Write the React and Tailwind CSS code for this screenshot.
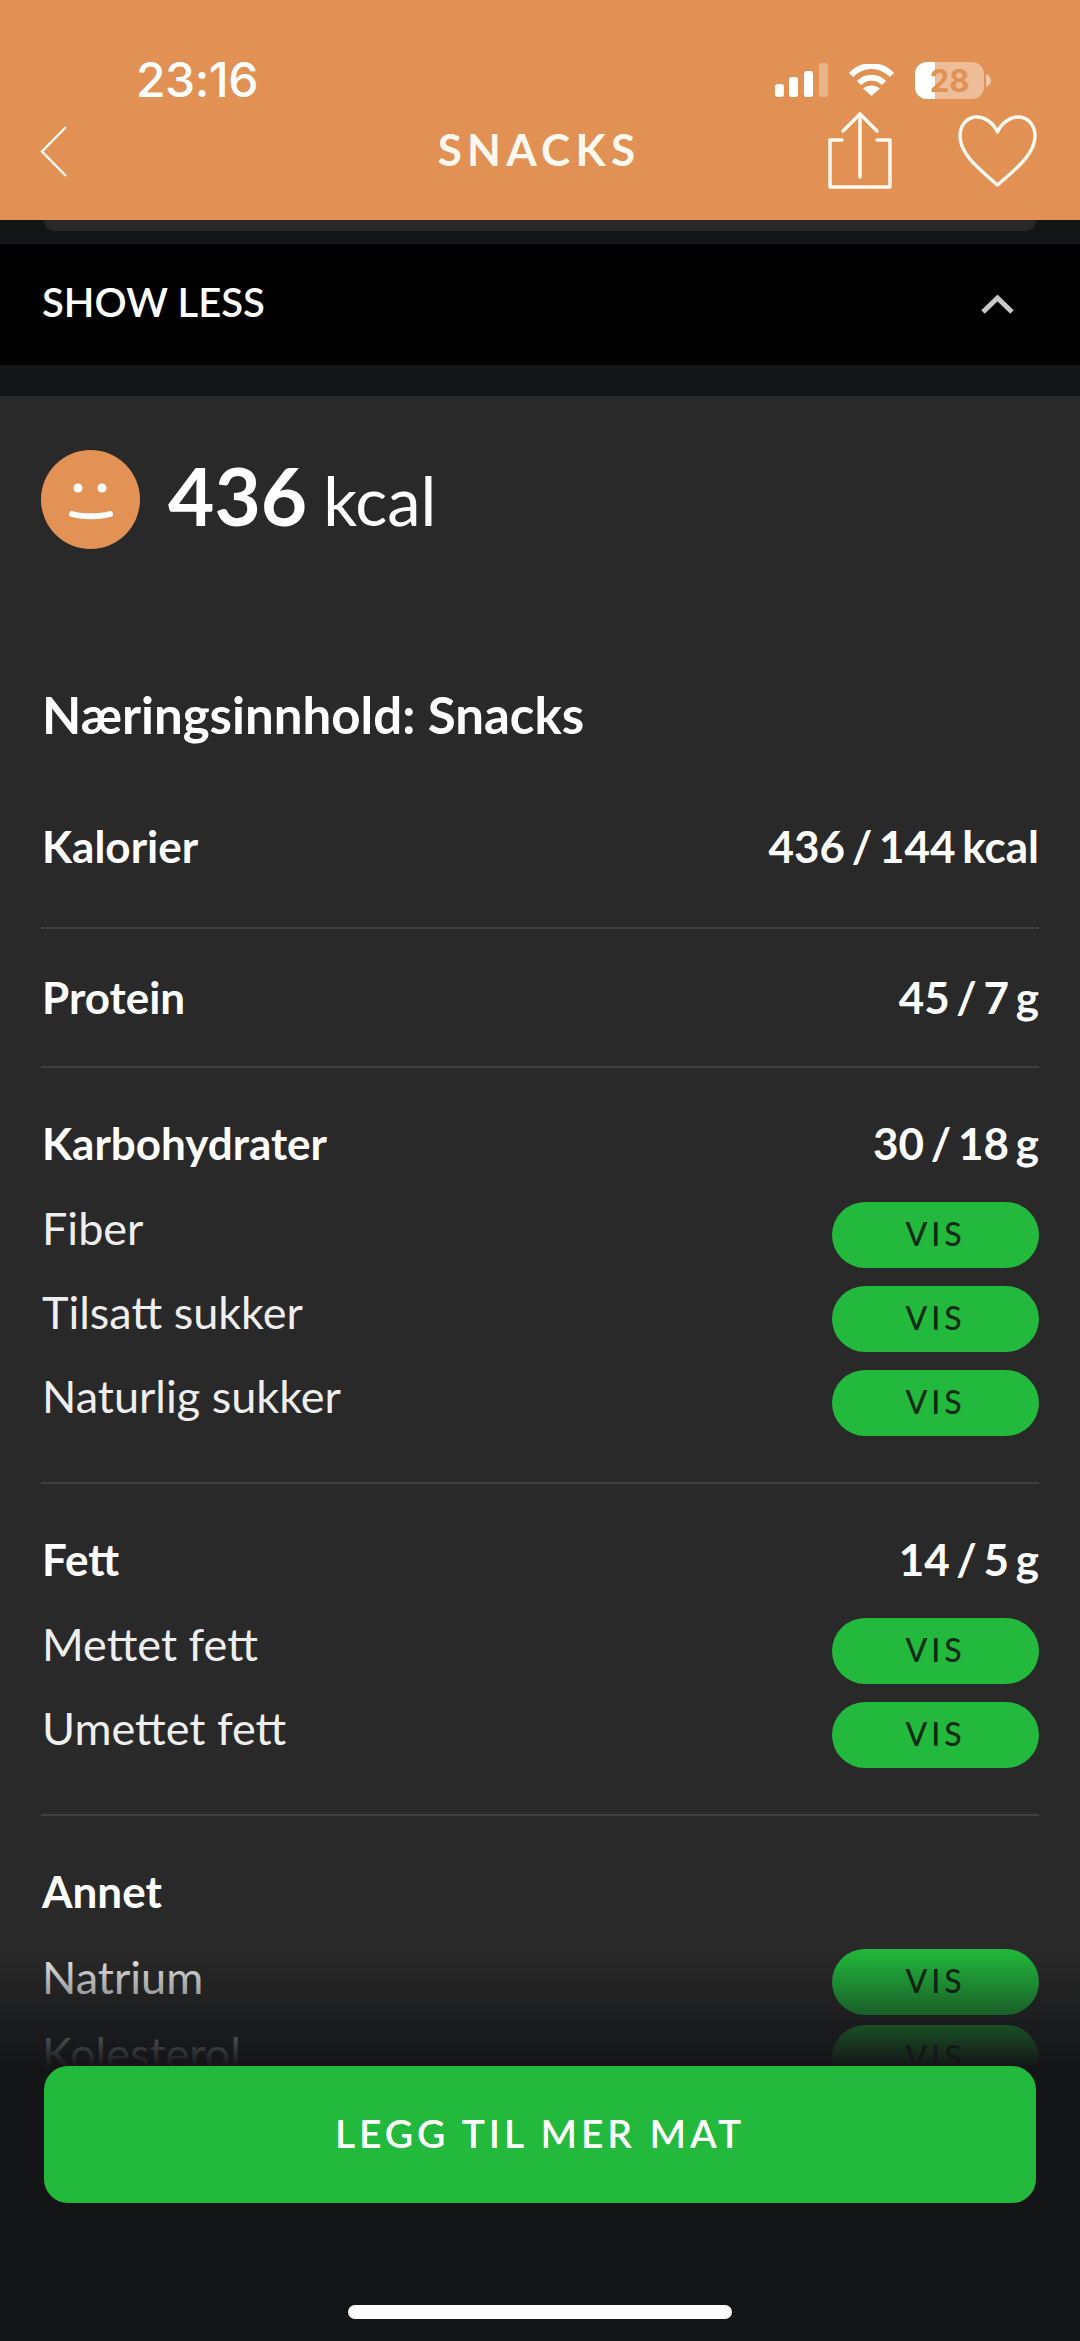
const fontStack = { fontFamily: 'Lato, "Noto Sans", sans-serif' };

function Signal() {
    return (
        <svg width="53" height="34" viewBox="0 0 53 34" fill="#fff">
            <rect x="0" y="21" width="9" height="13" rx="3" />
            <rect x="14" y="14" width="9" height="20" rx="2.5" />
            <rect x="29" y="8" width="9" height="26" rx="2.5" />
            <rect x="44" y="0" width="9" height="34" rx="2" fillOpacity="0.3" />
        </svg>
    );
}

function Wifi() {
    return (
        <svg width="47" height="32" viewBox="0 0 47 32" fill="none" stroke="#fff" strokeWidth="6">
            <path d="M3 11 C15 -1 32 -1 44 11" />
            <path d="M11 19 C18 12 29 12 36 19" />
            <path d="M23.5 32 L15 24.5 C20 20.5 27 20.5 32 24.5 Z" fill="#fff" stroke="none" />
        </svg>
    );
}

function Battery() {
    return (
        <div className="flex items-center gap-[2px]">
            <div className="relative w-[69px] h-[37px] rounded-[12px] bg-white/40 flex items-center justify-center">
                <div className="absolute left-0 top-0 bottom-0 w-[20px] rounded-l-[12px] bg-white" />
                <span className="relative text-[31px] leading-[37px] font-bold text-[#e09153]" style={{ fontFamily: 'Inter, sans-serif' }}>28</span>
            </div>
            <svg width="5" height="13" viewBox="0 0 5 13" fill="#fff" fillOpacity="0.5">
                <path d="M0 0 C3 1 5 4 5 6.5 C5 9 3 12 0 13 Z" />
            </svg>
        </div>
    );
}

function Back() {
    return (
        <svg width="28" height="51" viewBox="0 0 28 51" fill="none" stroke="#fff8ef" strokeWidth="2.5">
            <path d="M26 1 L2 25.5 L26 50" />
        </svg>
    );
}

function Share() {
    return (
        <svg width="68" height="80" viewBox="0 0 68 80" fill="none" stroke="#fff8ef" strokeWidth="3.5" strokeLinecap="round" strokeLinejoin="round">
            <path d="M16 29 H4 V76 H64 V29 H51" />
            <path d="M34 3 V66" />
            <path d="M17 20 L34 3 L51 20" />
        </svg>
    );
}

function HeartIcon() {
    return (
        <svg width="81" height="74" viewBox="0 0 81 74" fill="none" stroke="#fff8ef" strokeWidth="3.5" strokeLinejoin="round">
            <path d="M40.5 18 C36 8 27 3 20 3 C10 3 3 11 3 22 C3 40 22 55 40.5 71 C59 55 78 40 78 22 C78 11 71 3 61 3 C54 3 45 8 40.5 18 Z" />
        </svg>
    );
}

function Smiley() {
    return (
        <svg width="99" height="99" viewBox="0 0 99 99" className="shrink-0">
            <circle cx="49.5" cy="49.5" r="49.5" fill="#e39255" />
            <circle cx="37" cy="38" r="4.5" fill="#fff" />
            <circle cx="61" cy="38" r="4.5" fill="#fff" />
            <path d="M31 64 C40 67 59 67 69 64" fill="none" stroke="#fff" strokeWidth="6" strokeLinecap="round" />
        </svg>
    );
}

function Row({ label, value }) {
    return (
        <div className="flex items-center justify-between h-[60px] pl-[1px] pb-[2px] text-[44px] font-bold text-white">
            <span>{label}</span>
            {value && <span className="[word-spacing:-4px]">{value}</span>}
        </div>
    );
}

function SubRow({ label, last }) {
    return (
        <div className="flex items-center justify-between h-[66px] pl-[1px]">
            <span className={last ? 'text-[45px] text-[#eeeeee] pb-[8px]' : 'text-[45px] text-[#eeeeee] pb-[12px]'}>{label}</span>
            <button className="w-[207px] h-[66px] rounded-[33px] bg-[#22b93c] text-[32px] font-medium tracking-[0.12em] text-[#0f2a15] pb-[2px]">VIS</button>
        </div>
    );
}

export default function App() {
    return (
        <div className="relative w-[1080px] h-[2341px] overflow-hidden bg-[#141517]" style={fontStack}>
            {/* header */}
            <header className="h-[220px] bg-[#e09153] text-white">
                <div className="flex items-center justify-between h-[40px] translate-y-[60px] pl-[136px] pr-[89px]">
                    <span className="text-[48px] font-medium leading-none tracking-[-0.01em]" style={{ fontFamily: 'Inter, sans-serif' }}>23:16</span>
                    <div className="flex items-center gap-[20px]">
                        <Signal />
                        <Wifi />
                        <Battery />
                    </div>
                </div>
                <div className="grid grid-cols-[1fr_auto_1fr] items-center h-[80px] mt-[71px] pl-[40px] pr-[42px]">
                    <Back />
                    <h1 className="text-[44px] leading-[60px] pb-[5px] font-bold tracking-[0.12em] text-[#fff8ef]">SNACKS</h1>
                    <div className="flex items-center justify-end gap-[63px]">
                        <Share />
                        <HeartIcon />
                    </div>
                </div>
            </header>

            <div className="mx-[44px] h-[11px] rounded-b-[14px] bg-[#292929]" />

            <div className="flex items-center justify-between h-[121px] mt-[13px] bg-black pl-[42px] pr-[66px]">
                <span className="text-[40px] font-semibold text-white pb-[5px]">SHOW LESS</span>
                <svg width="33" height="19" viewBox="0 0 33 19" fill="none" stroke="#c8c8c8" strokeWidth="5">
                    <path d="M2 17 L16.5 3 L31 17" />
                </svg>
            </div>

            {/* card */}
            <main className="mt-[31px] bg-[#292929] pt-[54px] px-[41px] h-[1945px]">
                <div className="flex items-center gap-[28px] h-[99px]">
                    <Smiley />
                    <div className="flex items-baseline gap-[16px] text-white pb-[10px]">
                        <span className="text-[80px] font-bold leading-none">436</span>
                        <span className="text-[67px] leading-none">kcal</span>
                    </div>
                </div>

                <h2 className="mt-[138px] h-[60px] leading-[56px] pl-[1px] text-[51px] font-bold text-white">Næringsinnhold: Snacks</h2>

                <section className="mt-[70px] pb-[50px] border-b-2 border-[#3f3f3f]">
                    <Row label="Kalorier" value="436 / 144 kcal" />
                </section>
                <section className="pt-[39px] pb-[38px] border-b-2 border-[#3f3f3f]">
                    <Row label="Protein" value="45 / 7 g" />
                </section>
                <section className="pt-[46px] pb-[46px] border-b-2 border-[#3f3f3f]">
                    <Row label="Karbohydrater" value="30 / 18 g" />
                    <div className="flex flex-col gap-[18px] mt-[28px]">
                        <SubRow label="Fiber" />
                        <SubRow label="Tilsatt sukker" />
                        <SubRow label="Naturlig sukker" />
                    </div>
                </section>
                <section className="pt-[46px] pb-[46px] border-b-2 border-[#3f3f3f]">
                    <Row label="Fett" value="14 / 5 g" />
                    <div className="flex flex-col gap-[18px] mt-[28px]">
                        <SubRow label="Mettet fett" />
                        <SubRow label="Umettet fett" />
                    </div>
                </section>
                <section className="pt-[46px]">
                    <Row label="Annet" />
                    <div className="flex flex-col gap-[10px] mt-[27px]">
                        <SubRow label="Natrium" last />
                        <SubRow label="Kolesterol" last />
                    </div>
                </section>
            </main>

            {/* bottom fade with button */}
            <div className="absolute left-0 right-0 bottom-0 h-[391px] bg-gradient-to-b from-[#141517]/0 to-[#141517] to-[30%] px-[44px] pt-[116px]">
                <button className="w-full h-[137px] rounded-[24px] bg-[#22b93c] text-[39px] font-semibold tracking-[0.1em] text-white pb-[3px]">LEGG TIL MER MAT</button>
                <div className="mt-[102px] ml-[304px] w-[384px] h-[14px] rounded-full bg-white" />
            </div>
        </div>
    );
}
